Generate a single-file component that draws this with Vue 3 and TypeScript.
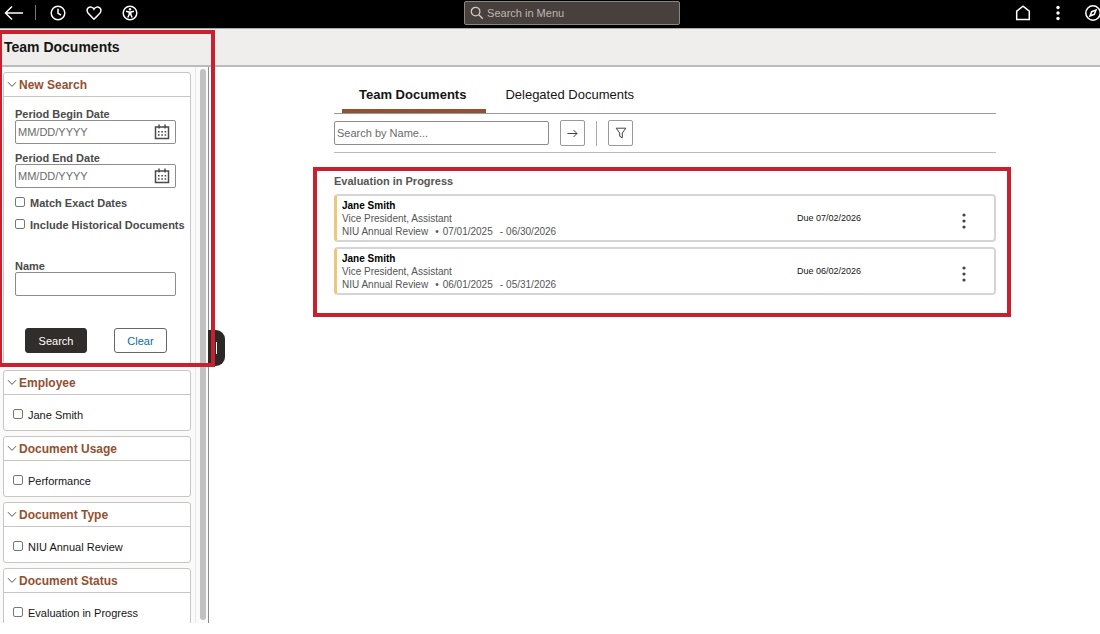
<script setup lang="ts">
import { ref } from 'vue'

interface Facet {
  title: string
  option: string
}

interface TeamDocument {
  id: number
  name: string
  job: string
  type: string
  begin: string
  end: string
  due: string
}

const facets: Facet[] = [
  { title: 'Employee', option: 'Jane Smith' },
  { title: 'Document Usage', option: 'Performance' },
  { title: 'Document Type', option: 'NIU Annual Review' },
  { title: 'Document Status', option: 'Evaluation in Progress' },
]

const documents: TeamDocument[] = [
  { id: 1, name: 'Jane Smith', job: 'Vice President, Assistant', type: 'NIU Annual Review', begin: '07/01/2025', end: '06/30/2026', due: '07/02/2026' },
  { id: 2, name: 'Jane Smith', job: 'Vice President, Assistant', type: 'NIU Annual Review', begin: '06/01/2025', end: '05/31/2026', due: '06/02/2026' },
]

const dateFields = [
  { id: 'period-begin', label: 'Period Begin Date' },
  { id: 'period-end', label: 'Period End Date' },
]

const tab = ref<'team' | 'delegated'>('team')
</script>

<template>
  <div class="app">
    <header class="topbar">
      <nav class="tools">
        <button class="icon" aria-label="Back">
          <svg width="20" height="16" viewBox="0 0 20 16"><path d="M19 8H1.5M8 1.5L1.5 8L8 14.5" /></svg>
        </button>
        <span class="tool-rule"></span>
        <button class="icon" aria-label="Recent">
          <svg width="16" height="16" viewBox="0 0 16 16"><circle cx="8" cy="8" r="6.8" /><path d="M8 3.8V8.3L11 10" /></svg>
        </button>
        <button class="icon" aria-label="Favorites">
          <svg width="16" height="16" viewBox="0 0 16 16"><path d="M8 14.2L2.2 8.2C.6 6.5 .8 4.1 2.2 2.9C4 1.4 6.7 1.9 8 4.2C9.3 1.9 12 1.4 13.8 2.9C15.2 4.1 15.4 6.5 13.8 8.2Z" /></svg>
        </button>
        <button class="icon" aria-label="Accessibility">
          <svg width="16" height="16" viewBox="0 0 16 16"><circle cx="8" cy="8" r="6.8" /><circle class="solid" cx="8" cy="4.3" r="1.2" /><path d="M4 6.3L7 7H9L12 6.3M8 7V9.3M7.2 7V9.5L5.8 12.5M8.8 7V9.5L10.2 12.5" /></svg>
        </button>
      </nav>
      <label class="menu-search">
        <svg width="14" height="14" viewBox="0 0 14 14"><circle cx="5.6" cy="5.6" r="4.3" /><path d="M8.8 8.8L12.8 12.8" /></svg>
        <input type="text" placeholder="Search in Menu" aria-label="Search in Menu" />
      </label>
      <nav class="tools tools-end">
        <button class="icon" aria-label="Home">
          <svg width="16" height="16" viewBox="0 0 16 16"><path d="M1.7 14.5V6.2L8 1.2L14.3 6.2V14.5Z" /></svg>
        </button>
        <button class="icon" aria-label="Actions">
          <svg width="16" height="16" viewBox="0 0 16 16"><g class="solid"><circle cx="8" cy="2.5" r="1.7" /><circle cx="8" cy="8" r="1.7" /><circle cx="8" cy="13.5" r="1.7" /></g></svg>
        </button>
        <button class="icon" aria-label="Navigator">
          <svg width="16" height="16" viewBox="0 0 16 16"><circle cx="8" cy="8" r="7.2" /><path d="M11 5L9.3 9.3L5 11L6.7 6.7Z" /></svg>
        </button>
      </nav>
    </header>

    <div class="title-band"><h1>Team Documents</h1></div>

    <div class="body">
      <aside class="sidebar">
        <div class="panels">
          <section class="panel">
            <h2 class="panel-head">
              <button type="button">
                <svg width="10" height="7" viewBox="0 0 10 7"><path d="M1 1.2L5 5.4L9 1.2" /></svg>New Search
              </button>
            </h2>
            <form class="search-form" @submit.prevent>
              <div v-for="field in dateFields" :key="field.id" class="field">
                <label :for="field.id">{{ field.label }}</label>
                <div class="box">
                  <input :id="field.id" type="text" placeholder="MM/DD/YYYY" />
                  <button type="button" :aria-label="'Choose ' + field.label">
                    <svg width="16" height="16" viewBox="0 0 16 16">
                      <path d="M1.5 3H14.5V14.5H1.5ZM5 .5V4.5M11 .5V4.5" />
                      <path class="dots" d="M4 7.8H12.2M4 11H12.2" />
                    </svg>
                  </button>
                </div>
              </div>
              <label class="check strong"><input type="checkbox" />Match Exact Dates</label>
              <label class="check strong"><input type="checkbox" />Include Historical Documents</label>
              <div class="field name-field">
                <label for="person-name">Name</label>
                <div class="box"><input id="person-name" type="text" /></div>
              </div>
              <div class="buttons">
                <button class="primary" type="submit">Search</button>
                <button class="secondary" type="reset">Clear</button>
              </div>
            </form>
          </section>

          <section v-for="facet in facets" :key="facet.title" class="panel">
            <h2 class="panel-head">
              <button type="button">
                <svg width="10" height="7" viewBox="0 0 10 7"><path d="M1 1.2L5 5.4L9 1.2" /></svg>{{ facet.title }}
              </button>
            </h2>
            <div class="facet">
              <label class="check"><input type="checkbox" />{{ facet.option }}</label>
            </div>
          </section>
        </div>
        <div class="track"><div class="thumb"></div></div>
        <button class="handle" type="button" aria-label="Collapse search panel"><span></span></button>
      </aside>

      <main class="content">
        <div class="tabs" role="tablist">
          <button role="tab" :class="{ active: tab === 'team' }" :aria-selected="tab === 'team'" @click="tab = 'team'">Team Documents</button>
          <button role="tab" :class="{ active: tab === 'delegated' }" :aria-selected="tab === 'delegated'" @click="tab = 'delegated'">Delegated Documents</button>
        </div>
        <div class="filter-row">
          <input type="text" placeholder="Search by Name..." aria-label="Search by Name" />
          <button type="button" aria-label="Go">
            <svg width="13" height="11" viewBox="0 0 13 11"><path d="M1.5 5.5H11M7.5 2L11 5.5L7.5 9" /></svg>
          </button>
          <span class="filter-rule"></span>
          <button type="button" aria-label="Filter">
            <svg width="12" height="12" viewBox="0 0 12 12"><path d="M1.2 1.2H10.8L7.3 6V10.8L4.7 9.3V6Z" /></svg>
          </button>
        </div>

        <section class="results">
          <h2>Evaluation in Progress</h2>
          <article v-for="doc in documents" :key="doc.id" class="card">
            <div class="info">
              <h3>{{ doc.name }}</h3>
              <p>{{ doc.job }}</p>
              <p class="period"><span>{{ doc.type }}</span><span class="bullet">•</span><span>{{ doc.begin }}</span><span class="dash">-</span><span>{{ doc.end }}</span></p>
            </div>
            <div class="due">Due {{ doc.due }}</div>
            <button type="button" aria-label="Document actions">
              <svg width="4" height="16" viewBox="0 0 4 16"><circle cx="2" cy="2" r="1.6" /><circle cx="2" cy="8" r="1.6" /><circle cx="2" cy="14" r="1.6" /></svg>
            </button>
          </article>
          <div class="callout results-callout"></div>
        </section>
      </main>
    </div>
    <div class="callout search-callout"></div>
  </div>
</template>

<style>
body {
  margin: 0;
  background: #fff;
}
</style>

<style scoped>
* {
  box-sizing: border-box;
}
.app {
  position: relative;
  display: flex;
  flex-direction: column;
  height: 100vh;
  padding-bottom: 11px;
  overflow: hidden;
  font-family: "Liberation Sans", Arial, sans-serif;
  font-size: 11px;
  color: #161513;
}
h1, h2, h3, p {
  margin: 0;
}
button, input {
  font: inherit;
  color: inherit;
}
button {
  padding: 0;
  border: 0;
  background: none;
}
input {
  min-width: 0;
}
svg {
  display: block;
  flex: none;
  fill: none;
  stroke: currentColor;
}
.topbar {
  flex: none;
  display: grid;
  grid-template-columns: 21fr 216px 19fr;
  align-items: start;
  height: 29px;
  background: #000;
  border-bottom: 1px solid #aaa;
}
.tools {
  display: flex;
  align-items: center;
  height: 25px;
  padding-left: 4px;
  color: #fff;
}
.tools svg {
  stroke-width: 1.5;
}
.tools .solid {
  fill: currentColor;
  stroke: none;
}
.tool-rule {
  width: 1px;
  height: 15px;
  margin: 0 14px 0 11px;
  background: #777;
}
.tools .icon + .icon {
  margin-left: 20px;
}
.tools-end {
  justify-content: flex-end;
  margin-right: -1px;
}
.tools-end .icon + .icon {
  margin-left: 19px;
}
.menu-search {
  display: flex;
  align-items: center;
  gap: 1px;
  height: 24px;
  margin-top: 1px;
  padding: 0 5px;
  border: 1px solid #8b8580;
  border-radius: 2px;
  background: #48403c;
  color: #d0cbc7;
}
.menu-search input {
  flex: 1;
  padding: 0 2px;
  border: 0;
  background: none;
}
.menu-search input::placeholder {
  color: #bdb7b3;
}
.menu-search svg {
  stroke-width: 1.3;
}
.title-band {
  flex: none;
  height: 38px;
  padding: 9px 4px 0;
  background: #efeeec;
  border-bottom: 2px solid #bbb;
}
h1 {
  font-size: 14px;
  line-height: 18px;
}
.body {
  flex: 1;
  display: flex;
  min-height: 0;
}
.sidebar {
  position: relative;
  flex: none;
  display: flex;
  width: 209px;
  border-right: 1px solid #8c8c8c;
  background: #fafafa;
}
.panels {
  flex: 1;
  display: flex;
  flex-direction: column;
  gap: 5px;
  padding: 5px 4px 0 3px;
  overflow: hidden;
  border-right: 1px solid #e8e8e8;
}
.panel {
  flex: none;
  border: 1px solid #c9c6c2;
  border-radius: 3px;
  background: #fff;
}
.panel-head {
  height: 24px;
  border-bottom: 1px solid #c9c6c2;
  font-size: 12px;
  color: #94502f;
}
.panel-head button {
  display: flex;
  align-items: center;
  gap: 2px;
  width: 100%;
  height: 23px;
  padding-left: 3px;
}
.panel-head svg {
  color: #555;
}
.search-form {
  display: flex;
  flex-direction: column;
  height: 267px;
  padding: 11px 14px 0 11px;
  color: #4a4a4a;
}
.field {
  margin-bottom: 8px;
}
.field label {
  display: block;
  font-weight: bold;
  line-height: 12px;
}
.box {
  display: flex;
  align-items: center;
  height: 24px;
  padding: 0 5px 0 0;
  border: 1px solid #8f8c89;
  border-radius: 2px;
  background: #fff;
}
.box input {
  flex: 1;
  width: 100%;
  padding: 0 2px;
  border: 0;
  background: none;
}
input::placeholder {
  color: #6b6b6b;
  opacity: 1;
}
.box svg {
  stroke-width: 1.5;
}
.box .dots {
  stroke-width: 1.6;
  stroke-dasharray: 1.6 1.7;
}
.check {
  display: flex;
  align-items: center;
  gap: 5px;
  line-height: 14px;
  white-space: nowrap;
}
.check input {
  appearance: none;
  flex: none;
  width: 10px;
  height: 10px;
  margin: 0;
  border: 1px solid #777;
  border-radius: 2px;
  background: #fff;
}
.check.strong {
  margin-bottom: 8px;
  font-weight: bold;
}
.check.strong input {
  margin-bottom: 2px;
}
.name-field {
  margin: 20px 0 32px;
}
.buttons {
  display: flex;
  justify-content: space-between;
  padding: 0 9px 0 10px;
}
.buttons button {
  height: 25px;
  border: 1px solid #312d2a;
  border-radius: 3px;
}
.buttons .primary {
  width: 62px;
  background: #312d2a;
  color: #fff;
}
.buttons .secondary {
  width: 53px;
  border-color: #666;
  background: #fff;
  color: #0b6ba8;
}
.facet {
  height: 35px;
  padding: 13px 9px 0;
}
.facet .check input {
  margin-bottom: 2px;
}
.track {
  width: 12px;
  padding: 2px 2px 3px 4px;
}
.thumb {
  height: 100%;
  border-radius: 3px;
  background: #c1c1c1;
}
.handle {
  position: absolute;
  top: 263px;
  left: 208px;
  width: 17px;
  height: 36px;
  padding-left: 8px;
  border-radius: 0 9px 9px 0;
  background: #2b2826;
}
.handle span {
  display: block;
  width: 1px;
  height: 12px;
  background: #fff;
}
.content {
  flex: 1;
  min-width: 0;
  padding: 14px 104px 0 125px;
}
.tabs {
  display: flex;
  gap: 2px;
  height: 33px;
  padding-left: 8px;
  border-bottom: 1px solid #999;
}
.tabs button {
  padding: 0 20px 2px 17px;
  border-bottom: 4px solid transparent;
  font-size: 13px;
  color: #161513;
}
.tabs .active {
  border-color: #94502f;
  font-weight: bold;
}
.filter-row {
  display: flex;
  align-items: center;
  gap: 11px;
  height: 39px;
  border-bottom: 1px solid #bbb;
}
.filter-row input {
  width: 215px;
  height: 24px;
  padding: 0 2px;
  border: 1px solid #8f8c89;
  border-radius: 2px;
}
.filter-row button {
  display: grid;
  place-items: center;
  width: 25px;
  height: 26px;
  border: 1px solid #999;
  border-radius: 2px;
  color: #444;
}
.filter-rule {
  width: 1px;
  height: 25px;
  background: #aaa;
}
.results {
  position: relative;
  padding: 21px 0 22px;
}
.results h2 {
  margin-bottom: 6px;
  font-size: 11px;
  line-height: 14px;
  color: #555;
}
.card {
  display: grid;
  grid-template-columns: 70% 1fr 60px;
  align-items: center;
  height: 48px;
  border: 2px solid #d5d5d5;
  border-left: 3px solid #ecc878;
  border-radius: 4px;
}
.card + .card {
  margin-top: 5px;
}
.info {
  padding-left: 5px;
  font-size: 10px;
  line-height: 13px;
  color: #555;
}
.info h3 {
  font-size: 10px;
  color: #000;
}
.period {
  display: flex;
  white-space: nowrap;
}
.bullet {
  margin: 0 4px 0 7px;
}
.dash {
  margin: 0 3px 0 7px;
}
.due {
  font-size: 9px;
}
.card button {
  display: flex;
  justify-content: center;
  padding-top: 6px;
  color: #444;
}
.card svg {
  fill: currentColor;
  stroke: none;
}
.callout {
  position: absolute;
  border: 4px solid #c8202f;
  pointer-events: none;
}
.search-callout {
  top: 30px;
  left: -2px;
  width: 217px;
  height: 337px;
}
.results-callout {
  inset: 14px -15px 0 -21px;
}
</style>
